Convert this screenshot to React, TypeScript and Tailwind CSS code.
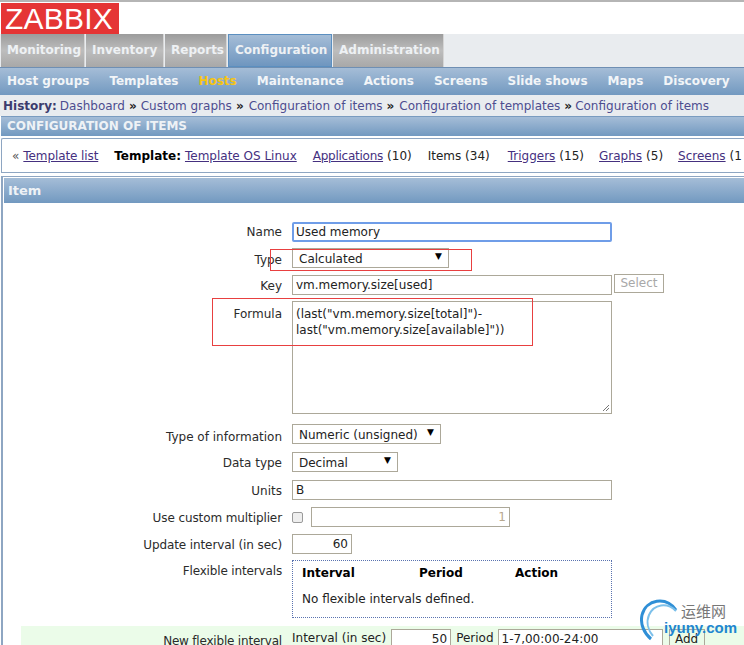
const font = "font-['DejaVu_Sans',sans-serif]";

function Tab({ label, w, active }: { label: string; w: string; active?: boolean }) {
  return (
    <div
      className={`${w} h-[33px] flex items-center pl-[6px] font-bold text-[12px] text-[#eef1f4] ${
        active
          ? "border border-[#5b8fc0] bg-gradient-to-b from-[#a5bdd7] to-[#6f96bf]"
          : "bg-gradient-to-b from-[#9c9c9c] via-[#bdbdbd] to-[#a8a8a8] border-r border-[#d5d5d5]"
      }`}
    >
      {label}
    </div>
  );
}

function Sub({ label, hl }: { label: string; hl?: boolean }) {
  return <span className={`font-bold ${hl ? "text-[#f7c513]" : "text-[#f2f5f8]"}`}>{label}</span>;
}

function Sep() {
  return <span className="w-px h-[11px] bg-[#5f7da5] mx-[10px]" />;
}

function Row({
  label,
  children,
  className,
  labelClass,
}: {
  label: string;
  children: React.ReactNode;
  className?: string;
  labelClass?: string;
}) {
  return (
    <div className={`flex ${className ?? ""}`}>
      <div className={`w-[279px] shrink-0 text-right text-[#2b2b2b] ${labelClass ?? "pt-[4px]"}`}>{label}</div>
      <div className="ml-[10px]">{children}</div>
    </div>
  );
}

const box = "border border-[#aca899] h-[20px] px-[3px] flex items-center text-[#222] bg-white";

function Select({ text, w }: { text: string; w: string }) {
  return (
    <div className={`${box} ${w} pl-[6px] justify-between pr-[6px]`}>
      <span className="pt-[3px]">{text}</span>
      <span className="text-[9px] text-black -mt-[4px]">▼</span>
    </div>
  );
}

export default function App() {
  return (
    <div className={`${font} relative w-[744px] h-[645px] overflow-hidden bg-white text-[12px] leading-[15px]`}>
      <div className="h-[2px] bg-[#b5b5b5]" />
      <div className="h-[32px] pt-px pl-px">
        <div className="w-[118px] h-[31px] bg-[#e53535] text-white font-['Liberation_Sans',sans-serif] text-[30px] leading-[31px] pl-[4px] tracking-[0.2px]">
          ZABBIX
        </div>
      </div>
      <div className="h-[33px] bg-[#e9ecef] flex pl-px gap-px">
        <Tab label="Monitoring" w="w-[84px]" />
        <Tab label="Inventory" w="w-[78px]" />
        <Tab label="Reports" w="w-[62px]" />
        <Tab label="Configuration" w="w-[104px]" active />
        <Tab label="Administration" w="w-[111px]" />
      </div>
      <div className="h-[28px] border-t border-[#6f8fb3] bg-gradient-to-b from-[#a5bdd7] to-[#7299c0] flex items-center pl-[7px] text-[12px] whitespace-nowrap">
        <Sub label="Host groups" /><Sep />
        <Sub label="Templates" /><Sep />
        <Sub label="Hosts" hl /><Sep />
        <Sub label="Maintenance" /><Sep />
        <Sub label="Actions" /><Sep />
        <Sub label="Screens" /><Sep />
        <Sub label="Slide shows" /><Sep />
        <Sub label="Maps" /><Sep />
        <Sub label="Discovery" /><Sep />
      </div>
      <div className="h-[21px] bg-[#e9ecef] flex items-center pl-[3px] pt-px text-[#4d4d8f] whitespace-nowrap">
        <b className="text-[#3c3c6e] mr-[3px]">History:</b>
        Dashboard <b className="mx-1 text-[#222]">»</b> Custom graphs <b className="ml-1 mr-[5px] text-[#222]">»</b> Configuration of items <b className="ml-1 mr-[5px] text-[#222]">»</b> Configuration of templates <b className="ml-1 mr-[3px] text-[#222]">»</b> Configuration of items
      </div>
      <div className="h-[20px] ml-px border-t border-[#7a9cc0] bg-gradient-to-b from-[#a5bdd7] to-[#7299c0] pl-[6px] flex items-center font-bold text-[#eef2f6]">
        CONFIGURATION OF ITEMS
      </div>
      <div className="mt-[2px] ml-px h-[35px] border border-[#8ea6c2] border-r-0 rounded-tl-[2px] flex items-center pl-[10px] pt-px whitespace-nowrap text-[#222]">
        <span className="text-[#555] mr-[4px]">«</span>
        <a className="underline text-[#45307f] tracking-[-0.1px]">Template list</a>
        <b className="ml-[16px] mr-[4px] text-black">Template:</b>
        <a className="underline text-[#45307f]">Template OS Linux</a>
        <a className="underline text-[#45307f] ml-[16px] tracking-[-0.25px]">Applications</a>
        <span className="ml-[4px]">(10)</span>
        <span className="ml-[16px]">Items (34)</span>
        <a className="underline text-[#45307f] ml-[18px]">Triggers</a>
        <span className="ml-1">(15)</span>
        <a className="underline text-[#45307f] ml-[15px]">Graphs</a>
        <span className="ml-1">(5)</span>
        <a className="underline text-[#45307f] ml-[15px]">Screens</a>
        <span className="ml-1">(1</span>
      </div>
      <div className="mt-[3px] ml-px h-[480px] border-l-2 border-t border-[#8ea6c2] pt-px">
        <div className="ml-px h-[25px] bg-gradient-to-b from-[#a5bdd7] to-[#7299c0] flex items-center pl-[4px] font-bold text-[13px] text-[#eef2f6]">
          Item
        </div>
        <div className="pt-[19px] flex flex-col">
          <Row label="Name" labelClass="pt-[3px]">
            <div className="border-2 border-[#6f9de8] rounded-[2px] h-[20px] w-[320px] flex items-center px-[2px] text-[#222]">Used memory</div>
          </Row>
          <Row label="Type" className="mt-[6px]" labelClass="pt-[5px]"><Select text="Calculated" w="w-[157px]" /></Row>
          <div className="flex mt-[7px] relative">
            <div className="w-[279px] text-right text-[#2b2b2b] pt-[4px]">Key</div>
            <div className={`${box} ml-[10px] w-[320px]`}>vm.memory.size[used]</div>
            <div className="ml-[2px] -mt-px border border-[#aca899] h-[19px] w-[50px] flex items-center justify-center text-[#a8a8a8]">Select</div>
          </div>
          <Row label="Formula" className="mt-[6px]" labelClass="pt-[6px]">
            <div className="relative border border-[#aca899] h-[113px] w-[320px] px-[3px] pt-[4px] text-[#222] leading-[16px]">
              (last("vm.memory.size[total]")-<br />last("vm.memory.size[available]"))
              <svg className="absolute right-px bottom-px" width="8" height="8" viewBox="0 0 8 8" stroke="#777" fill="none">
                <path d="M1 7 7 1M4 7 7 4" />
              </svg>
            </div>
          </Row>
          <Row label="Type of information" className="mt-[10px]" labelClass="pt-[6px]"><Select text="Numeric (unsigned)" w="w-[149px]" /></Row>
          <Row label="Data type" className="mt-[7px]"><Select text="Decimal" w="w-[106px]" /></Row>
          <Row label="Units" className="mt-[8px]"><div className={`${box} w-[320px]`}>B</div></Row>
          <Row label="Use custom multiplier" className="mt-[7px]" labelClass="pt-[4px] tracking-[-0.1px]">
            <div className="flex items-center">
              <div className="w-[11px] h-[11px] border border-[#9a9a9a] rounded-[2px] bg-[#eee]" />
              <div className={`${box} ml-[8px] w-[199px] justify-end text-[#b8a88f]`}>1</div>
            </div>
          </Row>
          <Row label="Update interval (in sec)" className="mt-[7px]" labelClass="pt-[4px] tracking-[-0.1px]">
            <div className={`${box} w-[60px] justify-end`}>60</div>
          </Row>
          <Row label="Flexible intervals" className="mt-[6px]" labelClass="pt-[4px] tracking-[-0.15px]">
            <div className="border border-dotted border-[#5a73b0] w-[320px] h-[58px] pl-[9px] pt-[5px] text-[#222]">
              <div className="flex font-bold text-black">
                <span className="w-[117px]">Interval</span>
                <span className="w-[96px]">Period</span>
                <span>Action</span>
              </div>
              <div className="mt-[11px]">No flexible intervals defined.</div>
            </div>
          </Row>
          <div className="flex mt-[8px] ml-[18px] bg-[#ebfce9] h-[40px] pt-[3px]">
            <div className="w-[261px] text-right text-[#2b2b2b] pt-[5px] tracking-[-0.2px]">New flexible interval</div>
            <div className="ml-[10px] flex whitespace-nowrap text-[#222]">
              <span className="pt-[2px]">Interval (in sec)</span>
              <div className={`${box} ml-[5px] w-[60px] justify-end`}>50</div>
              <span className="ml-[5px] pt-[2px]">Period</span>
              <div className={`${box} ml-[4px] w-[165px]`}>1-7,00:00-24:00</div>
              <div className="ml-[6px] border border-[#aca899] h-[20px] w-[36px] flex items-center justify-center">Add</div>
            </div>
          </div>
        </div>
      </div>

      <div className="absolute left-[270px] top-[249px] w-[202px] h-[22px] border border-[#e84040]" />
      <div className="absolute left-[212px] top-[298px] w-[321px] h-[48px] border border-[#e84040]" />

      <div className="absolute left-[640px] top-[597px] w-[104px] h-[48px]">
        <svg className="absolute left-0 top-0" width="48" height="46" viewBox="0 0 48 46" fill="none">
          <path d="M36 13C26 -1 6 2 2 18c-2 9 2 18 9 24" stroke="#2f8fd6" strokeWidth="3" />
          <path d="M36 14C27 5 14 7 9 18c-3 7-1 15 4 21" stroke="#7cc0ea" strokeWidth="2" />
        </svg>
        <span className="absolute left-[41px] top-[5px] text-[15px] text-[#777] font-['Noto_Sans_CJK_SC',sans-serif] leading-[18px]">运维网</span>
        <span className="absolute left-[24px] top-[23px] text-[15px] font-bold text-[#1e86d0] font-['Liberation_Sans',sans-serif] leading-[16px]">iyuny.com</span>
      </div>
    </div>
  );
}
